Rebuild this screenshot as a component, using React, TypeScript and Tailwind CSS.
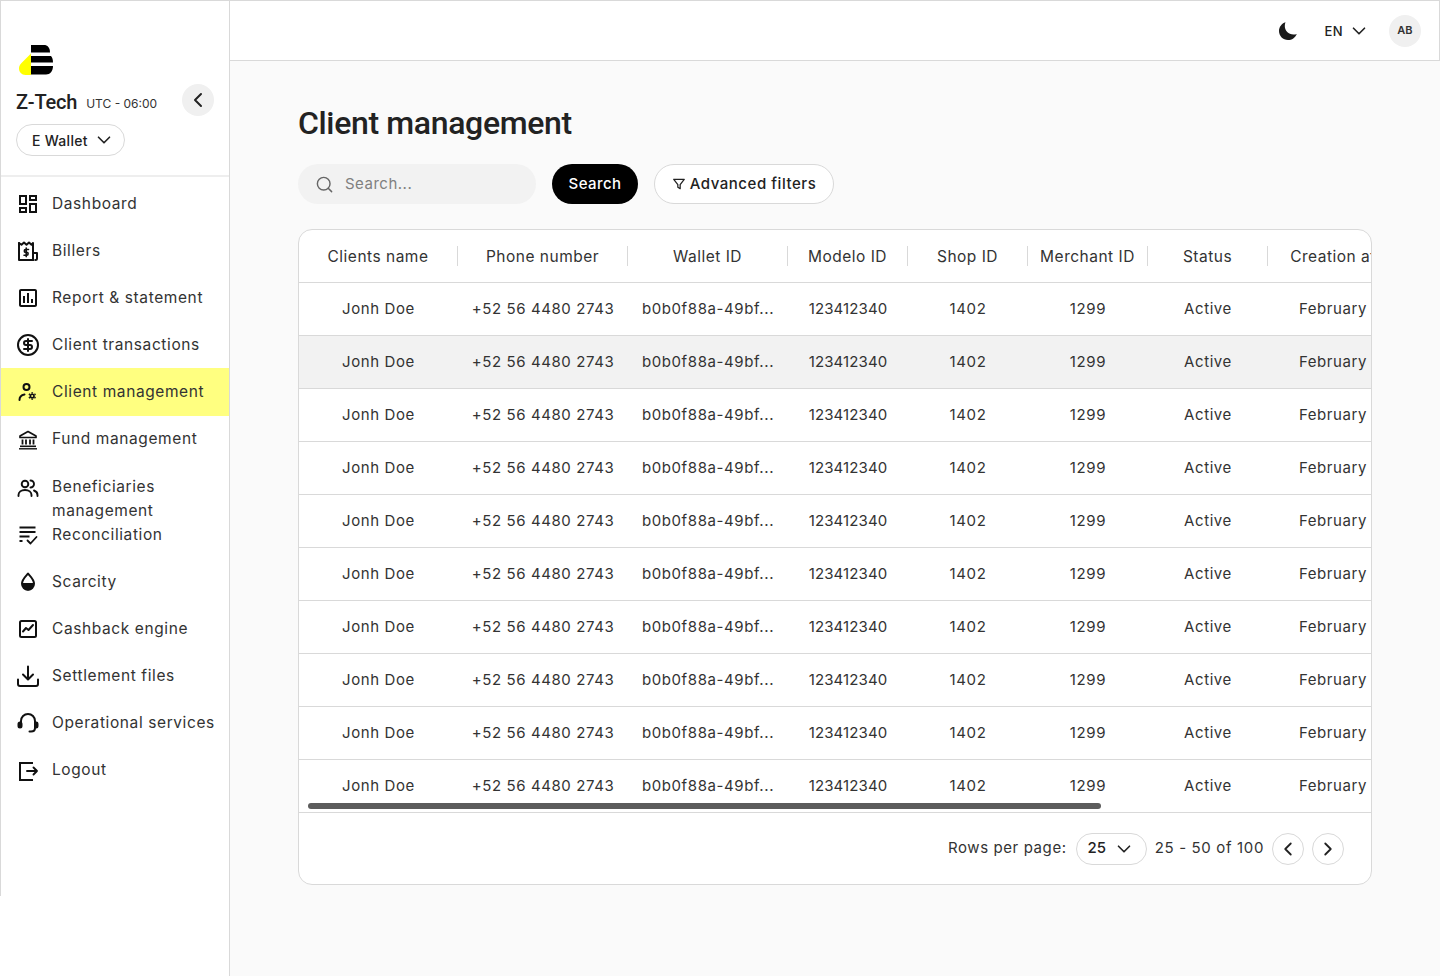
import { ChevronDown, ChevronLeft, ChevronRight, CircleDollarSign, Search } from "lucide-react";
import { MdOutlineAssessment, MdOutlineDashboard } from "react-icons/md";
import type { ReactNode } from "react";

const font = { sans: "font-['Inter','Noto_Sans',sans-serif]" };

function Svg({ children }: { children: ReactNode }) {
  return (
    <svg width="24" height="24" viewBox="0 0 24 24" fill="none" stroke="#111" strokeWidth="2" strokeLinecap="round" strokeLinejoin="round">
      {children}
    </svg>
  );
}

function Logo() {
  return (
    <svg width="34" height="30" viewBox="0 0 34 30">
      <path d="M12 8.5 L12 30 L6.5 30 C2.5 30 0 27 0 23.5 C0 21 1 19.5 2.5 18 Z" fill="#ffff00" />
      <path d="M12 0 H25 C28.5 0 31 2.5 31 7.5 H12 Z" fill="#000" />
      <path d="M12 11 H32 C33.3 12.5 34 14.5 34 17.5 H12 Z" fill="#000" />
      <path d="M12 21 H34 C34 26 31 29.5 27 29.5 H12 Z" fill="#000" />
    </svg>
  );
}

const navItems: { label: string; icon: ReactNode; active?: boolean; tall?: boolean }[] = [
  { label: "Dashboard", icon: <MdOutlineDashboard size={24} color="#111" /> },
  {
    label: "Billers",
    icon: (
      <Svg>
        <path d="M3 4v17h14.5" strokeWidth="2" />
        <path d="M3 4l2.5 1.8L8 3.5l2.5 2.3L13 3.5l2.5 2.3L17 4v17" />
        <path d="M17 14h4v5.5c0 1-.8 1.5-1.6 1.5" />
        <path d="M12.5 10.5H9.5c-1.6 0-1.6 2.8 0 2.8h1.4c1.6 0 1.6 2.9 0 2.9H8M10.2 9v8.6" strokeWidth="1.6" />
      </Svg>
    ),
  },
  { label: "Report & statement", icon: <MdOutlineAssessment size={24} color="#111" /> },
  { label: "Client transactions", icon: <CircleDollarSign size={24} color="#111" strokeWidth={2} /> },
  {
    label: "Client management",
    active: true,
    icon: (
      <Svg>
        <circle cx="10.5" cy="7" r="3" />
        <path d="M3.5 20c0-2.8 1.5-4.8 5-5.5" />
        <circle cx="16.2" cy="16" r="2.6" fill="#111" stroke="none" />
        <path d="M16.2 12.2v1.2M16.2 18.6v1.2M12.9 14.1l1 .6M18.5 17.3l1 .6M12.9 17.9l1-.6M18.5 14.7l1-.6" strokeWidth="1.7" strokeLinecap="butt" />
        <circle cx="16.2" cy="16" r="1" fill="#ffff80" stroke="none" />
      </Svg>
    ),
  },
  {
    label: "Fund management",
    tall: true,
    icon: (
      <Svg>
        <path d="M12 4.5L4 9v1.5h16V9z" strokeWidth="1.7" />
        <path d="M6.5 12.5v5M10 12.5v5M14 12.5v5M17.5 12.5v5" strokeWidth="1.8" strokeLinecap="butt" />
        <path d="M4 19.3h16" strokeWidth="1.6" strokeLinecap="butt" />
        <path d="M3 21.8h18" strokeWidth="1.4" strokeLinecap="butt" />
      </Svg>
    ),
  },
  {
    label: "Beneficiaries management",
    tall: true,
    icon: (
      <Svg>
        <circle cx="9" cy="9" r="3.3" strokeWidth="1.9" />
        <path d="M2.5 21v-1c0-2.800 2.500-5 6.500-5s6.500 2.200 6.500 5v1" strokeWidth="1.9" />
        <path d="M14.500 5.500a3.500 3.500 0 0 1 0 7" strokeWidth="1.9" />
        <path d="M18 15.500c2 .7 3.500 2.300 3.500 4.500v1" strokeWidth="1.9" />
      </Svg>
    ),
  },
  {
    label: "Reconciliation",
    icon: (
      <Svg>
        <path d="M3.500 4.500h16M3.500 9h16M3.500 13.500h10M3.500 18h3" strokeWidth="1.8" strokeLinecap="butt" />
        <path d="M11.500 17.500l3 3 6-6.500" strokeWidth="1.8" />
      </Svg>
    ),
  },
  {
    label: "Scarcity",
    icon: (
      <Svg>
        <path d="M12 3.500c-1 1.600-6 5.500-6 10.200A6 6 0 0 0 18 13.700C18 9 13 5.100 12 3.500z" strokeWidth="2" />
        <path d="M6 13h12c0 4-2.500 7.500-6 7.500S6 17 6 13z" fill="#111" stroke="none" />
      </Svg>
    ),
  },
  {
    label: "Cashback engine",
    icon: (
      <Svg>
        <rect x="4" y="4" width="16" height="16" rx="1.5" />
        <path d="M7 14.500l3-3.500 2.500 2 4.500-5" strokeWidth="2" />
      </Svg>
    ),
  },
  {
    label: "Settlement files",
    icon: (
      <Svg>
        <path d="M12 2.500v12.500M7 10.500l5 5 5-5" />
        <path d="M2 15.500v4.500a2 2 0 0 0 2 2h16a2 2 0 0 0 2-2v-4.500" />
      </Svg>
    ),
  },
  {
    label: "Operational services",
    icon: (
      <Svg>
        <path d="M5 14V10a7 7 0 0 1 14 0v7c0 2-1.500 3.500-4 3.500h-1.500" />
        <rect x="2.500" y="11.500" width="3" height="5" rx="1.500" fill="#111" />
        <rect x="19" y="11.500" width="2.500" height="5" rx="1.200" fill="#111" />
      </Svg>
    ),
  },
  {
    label: "Logout",
    icon: (
      <Svg>
        <path d="M17 5H4v17h13" strokeLinecap="butt" strokeLinejoin="miter" />
        <path d="M11 13h10M17.500 9.500l3.500 3.500-3.500 3.500" strokeWidth="1.900" />
      </Svg>
    ),
  },
];

const columns = [
  { label: "Clients name", w: "w-[159px]" },
  { label: "Phone number", w: "w-[170px]" },
  { label: "Wallet ID", w: "w-[160px]" },
  { label: "Modelo ID", w: "w-[120px]" },
  { label: "Shop ID", w: "w-[120px]" },
  { label: "Merchant ID", w: "w-[120px]" },
  { label: "Status", w: "w-[120px]" },
  { label: "Creation at", w: "w-[130px]" },
];

const rowValues = ["Jonh Doe", "+52 56 4480 2743", "b0b0f88a-49bf...", "123412340", "1402", "1299", "Active", "February"];
const rows = Array.from({ length: 10 }, (_, i) => i);

export default function App() {
  return (
    <div className={`flex min-h-[976px] bg-[#fafafa] text-[15px] text-[#333] ${font.sans}`}>
      {/* Sidebar */}
      <aside className="w-[230px] shrink-0 border-r border-t border-[#d9d9d9] bg-white">
        <div className="h-[895px] border-l border-[#d9d9d9]">
          <div className="h-[176px] border-b-2 border-[#eeeeee] pl-[15px] pr-[15px] pt-[44px]">
            <div className="pl-[3px]">
              <Logo />
            </div>
            <div className="mt-[9px] flex h-[32px] items-center">
              <span className="mt-[4px] font-['Roboto',sans-serif] text-[20px] font-medium tracking-[-0.2px] text-[#222]">Z-Tech</span>
              <span className="ml-[9px] mt-[7px] text-[12px] text-[#333]">UTC - 06:00</span>
              <button className="ml-auto flex h-[32px] w-[32px] items-center justify-center rounded-full bg-[#f0f0f0]">
                <ChevronLeft size={24} color="#222" strokeWidth={2} />
              </button>
            </div>
            <button className="mt-[8px] flex h-[32px] w-[109px] items-center gap-[5px] rounded-full border border-[#d9d9d9] bg-white pl-[15px] text-[14px] font-medium tracking-[0.3px] text-[#222]">
              E Wallet
              <ChevronDown size={22} color="#222" strokeWidth={1.8} />
            </button>
          </div>
          <nav className="pt-[3px]">
            {navItems.map((item) => (
              <div
                key={item.label}
                className={`flex items-start gap-[12px] pl-[15px] pr-[10px] pt-[12px] ${
                  item.active ? "-mb-px h-[48px] bg-[#ffff80]" : item.tall ? "h-[48px]" : "h-[47px]"
                }`}
              >
                <span className="flex h-[24px] w-[24px] shrink-0 items-center justify-center">{item.icon}</span>
                <span className="text-[15.5px] leading-[24px] tracking-[0.6px] text-[#333]">{item.label}</span>
              </div>
            ))}
          </nav>
        </div>
      </aside>

      <div className="min-w-0 flex-1">
        {/* Top bar */}
        <header className="flex h-[61px] items-center justify-end border-b border-r border-t border-[#d9d9d9] bg-white pr-[18px]">
          <svg width="24" height="24" viewBox="0 0 24 24" fill="#1a1a1a">
            <path d="M9.500 3.200C5.600 4.500 3 8 3 12c0 5 4.100 9 9 9 3.900 0 7.300-2.400 8.800-6.100-.9.400-2.200.6-3.300.6-5.100 0-8.700-4-8.700-8.500 0-1.500.2-2.800.7-3.800z" />
          </svg>
          <span className="ml-[25px] mt-[2px] text-[13px] font-medium tracking-[0.4px] text-[#222]">EN</span>
          <ChevronDown className="ml-[5px]" size={22} color="#222" strokeWidth={1.8} />
          <span className="ml-[19px] flex h-[32px] w-[32px] items-center justify-center rounded-full bg-[#f0f0f0] text-[11px] font-semibold text-[#333]">
            AB
          </span>
        </header>

        {/* Content */}
        <main className="px-[68px] pt-[41px]">
          <h1 className="font-['Roboto',sans-serif] text-[32px] font-medium leading-[42px] tracking-[-0.35px] text-[#222]">Client management</h1>
          <div className="mt-[20px] flex items-center gap-[16px]">
            <div className="flex h-[40px] w-[238px] items-center gap-[11px] rounded-full bg-[#f2f2f2] pl-[17px]">
              <Search size={19} color="#666" strokeWidth={1.8} />
              <span className="mt-[1px] text-[15px] tracking-[0.5px] text-[#808080]">Search...</span>
            </div>
            <button className="h-[40px] w-[86px] rounded-full bg-black text-[15px] font-medium tracking-[0.4px] text-white">Search</button>
            <button className="flex h-[40px] w-[180px] items-center justify-center gap-[4px] rounded-full border border-[#d9d9d9] bg-white text-[15px] font-medium tracking-[0.55px] text-[#222]">
              <svg width="14" height="14" viewBox="0 0 24 24" fill="none" stroke="#222" strokeWidth="2.200" strokeLinejoin="round">
                <path d="M3 4h18l-7 9v7l-4-2.500V13z" />
              </svg>
              Advanced filters
            </button>
          </div>

          {/* Table */}
          <div className="relative mt-[25px] h-[656px] overflow-hidden rounded-[14px] border border-[#d9d9d9] bg-white">
            <div className="h-[583px] overflow-hidden border-b border-[#d9d9d9]">
              <table className="w-[1099px] table-fixed border-collapse">
                <thead>
                  <tr className="h-[52px] border-b border-[#d9d9d9]">
                    {columns.map((col, i) => (
                      <th key={col.label} className={`${col.w} p-0 pt-[1px] text-center font-normal`}>
                        <div className={`flex h-[20px] items-center justify-center whitespace-nowrap text-[15.5px] tracking-[0.5px] ${i < 7 ? "border-r border-[#d9d9d9]" : ""}`}>
                          {col.label}
                        </div>
                      </th>
                    ))}
                  </tr>
                </thead>
                <tbody>
                  {rows.map((r) => (
                    <tr key={r} className={`h-[53px] border-b border-[#d9d9d9] ${r === 1 ? "bg-[#f2f2f2]" : ""}`}>
                      {rowValues.map((v, i) => (
                        <td key={i} className={`whitespace-nowrap p-0 pt-[2px] text-center ${i === 3 ? "tracking-[0.1px]" : "tracking-[0.6px]"}`}>
                          {v}
                        </td>
                      ))}
                    </tr>
                  ))}
                </tbody>
              </table>
            </div>
            <div className="absolute left-[9px] top-[573px] h-[6px] w-[793px] rounded-full bg-[#5c5c5c]" />
            <div className="flex h-[71px] items-center justify-end gap-[8px] pr-[27px]">
              <span className="mr-[1px] tracking-[0.6px]">Rows per page:</span>
              <button className="flex h-[32px] w-[71px] items-center justify-center gap-[7px] rounded-full border border-[#d9d9d9] font-medium text-[#222]">
                25
                <ChevronDown size={22} color="#222" strokeWidth={1.8} />
              </button>
              <span className="tracking-[0.65px]">25 - 50 of 100</span>
              <button className="flex h-[32px] w-[32px] items-center justify-center rounded-full border border-[#d9d9d9]">
                <ChevronLeft size={22} color="#222" strokeWidth={2} />
              </button>
              <button className="flex h-[32px] w-[32px] items-center justify-center rounded-full border border-[#d9d9d9]">
                <ChevronRight size={22} color="#222" strokeWidth={2} />
              </button>
            </div>
          </div>
        </main>
      </div>
    </div>
  );
}
